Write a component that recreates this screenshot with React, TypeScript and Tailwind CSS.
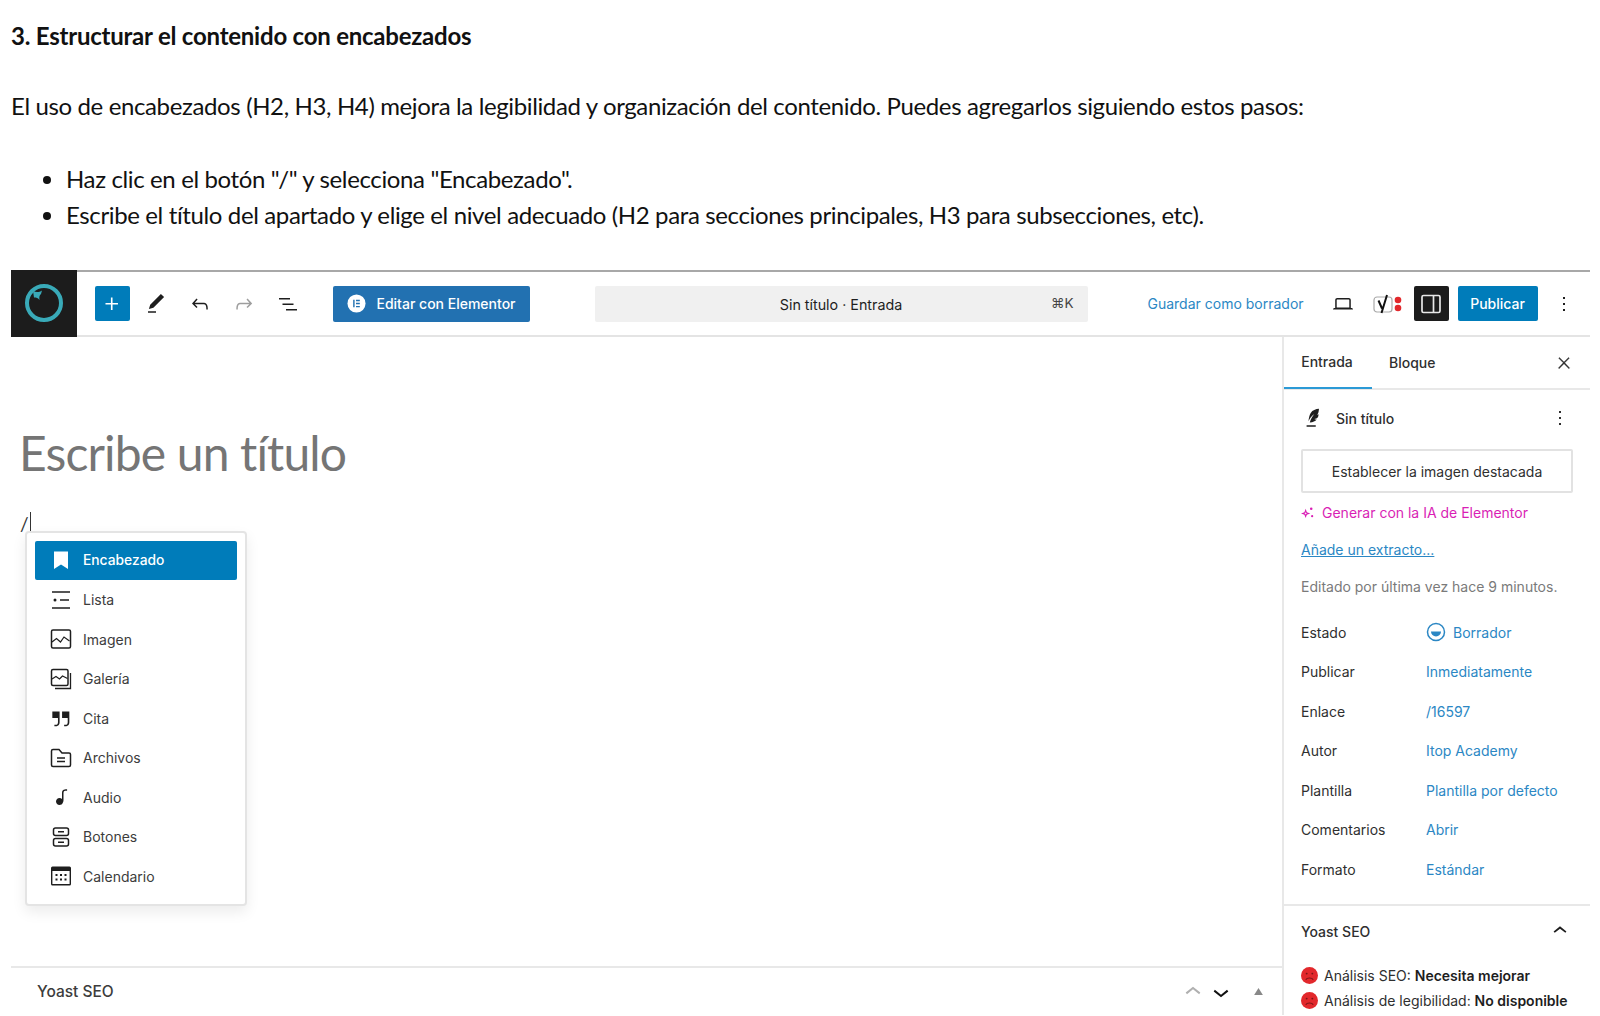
import type { ReactNode } from 'react';

const ui = "font-['Inter','Liberation_Sans',sans-serif]";

function Wp({ d, className = 'w-6 h-6', fill = 'currentColor' }: { d: string; className?: string; fill?: string }) {
  return (
    <svg viewBox="0 0 24 24" className={className} fill={fill}>
      <path d={d} />
    </svg>
  );
}

const paths = {
  plus: 'M11 12.5V17.5H12.5V12.5H17.5V11H12.5V6H11V11H6V12.5H11Z',
  brush: 'M20.1 5.1L16.9 2 6.2 12.7l-1.3 4.4 4.5-1.3L20.1 5.1zM4 20.8h8v-1.5H4v1.5z',
  undo: 'M18.3 11.7c-.6-.6-1.4-.9-2.3-.9H6.7l2.9-3.3-1.1-1-4.5 5L8.5 16l1-1-2.7-2.7H16c.5 0 .9.2 1.3.5 1 1 1 3.4 1 4.5v.3h1.5v-.2c0-1.5 0-4.3-1.5-5.7z',
  redo: 'M15.6 6.5l-1.1 1 2.9 3.3H8c-.9 0-1.7.3-2.3.9-1.4 1.5-1.4 4.2-1.4 5.6v.2h1.5v-.3c0-1.1 0-3.5 1-4.5.3-.3.7-.5 1.3-.5h9.2L14.5 15l1.1 1.1 4.6-4.6-4.6-5z',
  listView: 'M3 6h11v1.5H3V6zm3.5 5.5h11V13h-11v-1.5zM21 17H10v1.5h11V17z',
  close: 'M13 11.8l6.1-6.3-1-1-6.1 6.2-6.1-6.2-1 1 6.1 6.3-6.5 6.7 1 1 6.5-6.6 6.5 6.6 1-1z',
  more: 'M13 19h-2v-2h2v2zm0-6h-2v-2h2v2zm0-6h-2V5h2v2z',
  up: 'M6.5 12.4L12 8l5.5 4.4-.9 1.2L12 10l-4.5 3.6-1-1.2z',
  down: 'M17.5 11.6L12 16l-5.5-4.4.9-1.2L12 14l4.5-3.6 1 1.2z',
  laptop: 'M20.5 16h-.7V8c0-1.1-.9-2-2-2H6.2c-1.1 0-2 .9-2 2v8h-.7c-.8 0-1.5.7-1.5 1.5h20c0-.8-.7-1.5-1.5-1.5zM5.7 8c0-.3.2-.5.5-.5h11.6c.3 0 .5.2.5.5v7.6H5.7V8z',
  audio: 'M17.7 4.3c-1.2 0-2.8 0-3.8 1-.6.6-.9 1.5-.9 2.6V14c-.6-.6-1.5-1-2.5-1C8.6 13 7 14.6 7 16.5S8.6 20 10.5 20c1.5 0 2.8-1 3.3-2.3.5-.8.7-1.8.7-2.5V7.9c0-.7.2-1.2.5-1.6.6-.6 1.8-.6 2.8-.6h.3V4.3h-.4z',
  quote: 'M13 6v6h5.2v4c0 .8-.2 1.4-.5 1.7-.6.6-1.6.6-2.5.5h-.3v1.5h.5c1 0 2.3-.1 3.3-1 .6-.6 1-1.6 1-2.8V6H13zm-9 6h5.2v4c0 .8-.2 1.4-.5 1.7-.6.6-1.6.6-2.5.5h-.3v1.5h.5c1 0 2.3-.1 3.3-1 .6-.6 1-1.6 1-2.8V6H4v6z',
};

function Line({ children }: { children: ReactNode }) {
  return (
    <svg viewBox="0 0 24 24" className="w-6 h-6" fill="none" stroke="currentColor" strokeWidth="1.5">
      {children}
    </svg>
  );
}

const blockItems: { label: string; icon: ReactNode }[] = [
  {
    label: 'Encabezado',
    icon: <Wp d="M5 3.500h14V21l-7-4.600L5 21z" />,
  },
  {
    label: 'Lista',
    icon: (
      <Line>
        <path d="M3 4h18M11 12h9M3 20h18" />
        <circle cx="6" cy="12" r="1.500" fill="currentColor" stroke="none" />
      </Line>
    ),
  },
  {
    label: 'Imagen',
    icon: (
      <Line>
        <rect x="2.500" y="3" width="19" height="18" rx="1.500" />
        <path d="M3 15l4.500-3.500 4 3.500 3.500-5 5.500 4" strokeWidth="1.200" />
      </Line>
    ),
  },
  {
    label: 'Galería',
    icon: (
      <Line>
        <rect x="2.500" y="2.500" width="16.500" height="16" rx="1.500" />
        <path d="M3 12l4-2.500 3.500 2.500 3-3 5 2.500" strokeWidth="1.200" />
        <path d="M21.500 6v15.500H6" strokeWidth="1.300" />
      </Line>
    ),
  },
  { label: 'Cita', icon: <Wp d={paths.quote} className="w-[26px] h-[26px] -mx-px" /> },
  {
    label: 'Archivos',
    icon: (
      <Line>
        <path d="M2.500 5a1.500 1.500 0 0 1 1.500-1.500h6l3 3.500h7a1.500 1.500 0 0 1 1.500 1.500V19a1.500 1.500 0 0 1-1.500 1.500H4A1.500 1.500 0 0 1 2.500 19z" />
        <path d="M8 12h8M8 15.500h8" />
      </Line>
    ),
  },
  { label: 'Audio', icon: <Wp d={paths.audio} /> },
  {
    label: 'Botones',
    icon: (
      <Line>
        <rect x="4.500" y="3" width="15" height="7.500" rx="2" />
        <rect x="4.500" y="13.500" width="15" height="7.500" rx="2" />
        <path d="M9 6.800h6M9 17.200h6" />
      </Line>
    ),
  },
  {
    label: 'Calendario',
    icon: (
      <svg viewBox="0 0 24 24" className="w-6 h-6" fill="currentColor">
        <path d="M3.500 2.500h17A1.500 1.500 0 0 1 22 4v16a1.500 1.500 0 0 1-1.500 1.500h-17A1.500 1.500 0 0 1 2 20V4a1.500 1.500 0 0 1 1.500-1.500zm-.1 4.500v13c0 .1 0 .1.1.1h17c.1 0 .1 0 .1-.1V7z" />
        <path d="M6.500 10h2v2h-2zm4.500 0h2v2h-2zm4.500 0h2v2h-2zM6.500 14.500h2v2h-2zm4.500 0h2v2h-2zm4.500 0h2v2h-2z" />
      </svg>
    ),
  },
];

const meta = [
  { label: 'Publicar', value: 'Inmediatamente' },
  { label: 'Enlace', value: '/16597' },
  { label: 'Autor', value: 'Itop Academy' },
  { label: 'Plantilla', value: 'Plantilla por defecto' },
  { label: 'Comentarios', value: 'Abrir' },
  { label: 'Formato', value: 'Estándar' },
];

function Sad() {
  return (
    <svg viewBox="0 0 18 18" className="w-[17px] h-[17px] shrink-0">
      <circle cx="9" cy="9" r="9" fill="#e2282c" />
      <circle cx="6" cy="7" r="1" fill="#7a1517" />
      <circle cx="12" cy="7" r="1" fill="#7a1517" />
      <path d="M5 13.500c1.500-2.500 6.500-2.500 8 0" fill="none" stroke="#7a1517" strokeWidth="1.200" />
    </svg>
  );
}

function Toolbar() {
  return (
    <div className="flex h-[67px] shrink-0 items-center border-t-2 border-b-2 border-t-[#a8a8a8] border-b-[#e4e4e4]">
      <div className="flex h-[67px] w-[66px] shrink-0 items-center justify-center bg-[#1c1c1c]">
        <svg viewBox="0 0 40 40" className="-mt-px w-10 h-10" fill="none">
          <circle cx="20" cy="20" r="17" stroke="#39aab8" strokeWidth="4" />
          <path d="M9 8c3 1.500 6 1.500 9-.5l-1 3.500c-1.500 1-2 3-1.500 6-1.500-2-3-2.500-5.500-2.500z" fill="#39aab8" />
        </svg>
      </div>
      <button className="ml-[17.500px] flex h-[35px] w-[35px] items-center justify-center rounded-[2px] bg-[#007cba] text-white">
        <Wp d={paths.plus} className="w-[26px] h-[26px]" />
      </button>
      <div className="ml-[14px] flex items-center gap-5 text-[#1e1e1e]">
        <Wp d={paths.brush} />
        <Wp d={paths.undo} />
        <Wp d={paths.redo} className="w-6 h-6 text-[#9e9e9e]" />
        <Wp d={paths.listView} />
      </div>
      <button className="ml-[33px] flex h-[36px] w-[197px] items-center rounded-[2px] bg-[#2271b1] pl-[14px] text-[14px] font-medium text-white">
        <svg viewBox="0 0 20 20" className="w-[19px] h-[19px]">
          <circle cx="10" cy="10" r="9.500" fill="#fff" />
          <path d="M6.500 6h1.500v8H6.500zM9.500 6h4v1.500h-4zM9.500 9.250h4v1.500h-4zM9.500 12.500h4V14h-4z" fill="#2271b1" />
        </svg>
        <span className="ml-[11px]">Editar con Elementor</span>
      </button>
      <div className="relative ml-[65px] flex h-[36px] w-[493px] items-center justify-center rounded-[2px] bg-[#f0f0f0] text-[14.300px] text-[#1e1e1e]">
        <span className="mt-[3px]">Sin título · Entrada</span>
        <span className="absolute right-[14px] text-[13.500px] text-[#444]">⌘K</span>
      </div>
      <span className="ml-[60px] text-[14px] text-[#2b87c4]">Guardar como borrador</span>
      <div className="ml-[27px] text-[#1e1e1e]">
        <Wp d={paths.laptop} />
      </div>
      <svg viewBox="0 0 32 24" className="ml-[17px] h-6 w-8">
        <rect x="2" y="5" width="18" height="15" rx="3" fill="none" stroke="#aaa" strokeWidth="1.200" />
        <path d="M6.500 8.500l3.500 8M15 3L9.500 21" fill="none" stroke="#111" strokeWidth="2" />
        <circle cx="26" cy="8" r="3.300" fill="#e2282c" />
        <circle cx="26" cy="16" r="3.300" fill="#e2282c" />
      </svg>
      <button className="ml-[10px] flex h-[35px] w-[35px] items-center justify-center rounded-[2px] bg-[#1c1c1c] text-[#e8e8e8]">
        <svg viewBox="0 0 24 24" className="w-6 h-6" fill="none" stroke="currentColor" strokeWidth="1.700">
          <rect x="3" y="3.500" width="18" height="17" rx="1.500" />
          <path d="M14.500 3.500v17" />
        </svg>
      </button>
      <button className="ml-[9px] flex h-[35px] w-[80px] items-center justify-center rounded-[2px] bg-[#007cba] text-[14px] font-medium text-white">
        Publicar
      </button>
      <div className="ml-[14px] text-[#1e1e1e]">
        <Wp d={paths.more} />
      </div>
    </div>
  );
}

function Sidebar() {
  return (
    <aside className="flex w-[308px] shrink-0 flex-col border-l-2 border-[#e8e8e8] text-[14px] text-[#2f2f2f]">
      <div className="flex h-[53px] shrink-0 items-center border-b-2 border-[#e8e8e8]">
        <div className="flex h-[53px] w-[88px] items-center justify-center border-b-2 border-[#2b9ad6] pr-[2px]">
          <span className="font-medium">Entrada</span>
        </div>
        <span className="ml-[17px] font-medium">Bloque</span>
        <div className="ml-auto mr-[17px] h-[18px] w-[18px]">
          <Wp d={paths.close} className="w-[18px] h-[18px] stroke-current stroke-[0.5]" />
        </div>
      </div>
      <div className="flex flex-col pl-[17px] pr-[17px]">
        <div className="mt-[16px] flex h-6 items-center">
          <svg viewBox="0 0 24 24" className="ml-px w-[22px] h-[22px] text-[#1e1e1e]" fill="currentColor">
            <path d="M18.500 2c-3.500.3-7 1.500-9 4.500C8 9 7.500 12 7 15.500c1.500-3 3.500-6 6.500-8-2 2.500-4 5.500-5 9.500 3.500-.5 6-1.500 7.500-3.500-1 0-2 0-2.500-.5 1.500 0 3-.5 3.800-1.800.7-1.200.7-2.300.7-3.200-.6.300-1.300.300-1.800.200 1.300-.7 2-2 2.300-6zM5 20h10v1.500H5z" />
          </svg>
          <span className="ml-[12px] font-medium">Sin título</span>
          <div className="ml-auto mr-[1px] flex h-6 w-6 items-center justify-center">
            <Wp d={paths.more} className="w-6 h-6" />
          </div>
        </div>
        <button className="mt-[19px] h-[44px] w-[272px] rounded-[2px] border-2 border-[#e2e2e2] text-[14px] text-[#2f2f2f]">
          Establecer la imagen destacada
        </button>
        <div className="mt-[9px] flex h-[20px] items-center text-[#d91fb5]">
          <svg viewBox="0 0 14 14" className="w-[13px] h-[13px]" fill="currentColor">
            <path d="M5 3l1.300 3.700L10 8 6.300 9.300 5 13 3.700 9.300 0 8l3.700-1.300zM5 6.500L4.600 7.600 3.500 8l1.100.4.400 1.100.4-1.100 1.100-.4-1.100-.4z" />
            <circle cx="11" cy="3" r="1.400" />
            <circle cx="12" cy="11" r="1.200" />
          </svg>
          <span className="ml-[8px]">Generar con la IA de Elementor</span>
        </div>
        <a className="mt-[18px] h-[20px] leading-[20px] text-[#2b87c4] underline">Añade un extracto...</a>
        <p className="mt-[17px] h-[20px] leading-[20px] text-[#7a7a7a]">Editado por última vez hace 9 minutos.</p>
        <div className="mt-[15.500px] flex h-[39.500px] items-center">
          <span className="w-[125px]">Estado</span>
          <svg viewBox="0 0 20 20" className="w-[20px] h-[20px] text-[#2b87c4]">
            <circle cx="10" cy="10" r="8.500" fill="none" stroke="currentColor" strokeWidth="1.500" />
            <path d="M5 9.500h10a5 5 0 0 1-10 0z" fill="currentColor" />
          </svg>
          <span className="ml-[7px] text-[#2b87c4]">Borrador</span>
        </div>
        {meta.map((m) => (
          <div key={m.label} className="flex h-[39.500px] items-center">
            <span className="w-[125px]">{m.label}</span>
            <span className="text-[#2b87c4]">{m.value}</span>
          </div>
        ))}
      </div>
      <div className="mt-[15px] border-t-2 border-[#e8e8e8] pl-[17px] pr-[17px]">
        <div className="mt-[13px] flex h-6 items-center justify-between">
          <span className="font-medium">Yoast SEO</span>
          <div className="mr-[-1px]">
            <Wp d={paths.up} className="w-7 h-7 text-[#1e1e1e]" />
          </div>
        </div>
        <div className="mt-[20px] flex h-[25px] items-center gap-[6px]">
          <Sad />
          <span>
            Análisis SEO: <span className="font-semibold text-[#1e1e1e]">Necesita mejorar</span>
          </span>
        </div>
        <div className="flex h-[24.500px] items-center gap-[6px]">
          <Sad />
          <span>
            Análisis de legibilidad: <span className="font-semibold text-[#1e1e1e]">No disponible</span>
          </span>
        </div>
      </div>
    </aside>
  );
}

function EditorCanvas() {
  return (
    <div className="relative flex min-w-0 flex-1 flex-col">
      <div className="flex-1 pl-[9px]">
        <h2 className="mt-[84px] -ml-px font-['Lato',sans-serif] text-[48px] leading-[64px] tracking-[-0.85px] text-[#757575]">
          Escribe un título
        </h2>
        <div className="mt-[23px] flex h-[28px] items-center font-['Lato',sans-serif] text-[19px] text-[#333]">
          <span className="mt-[4px]">/</span>
          <span className="ml-[1px] h-[21px] w-[1px] bg-[#333]" />
        </div>
      </div>

      {/* block inserter */}
      <div className="absolute left-[14px] top-[193.500px] w-[222px] rounded-[4px] border-2 border-[#e4e4e4] bg-white p-[8px] shadow-[0_6px_14px_rgba(0,0,0,0.08)]">
        {blockItems.map((item, i) => (
          <div
            key={item.label}
            className={
              i === 0
                ? 'flex h-[39.500px] items-center rounded-[2px] bg-[#007cba] pl-[14px] text-[13.800px] font-medium text-white'
                : 'flex h-[39.500px] items-center pl-[14px] text-[14px] text-[#3c3c3c]'
            }
          >
            <span className={i === 0 ? 'text-white' : 'text-[#1e1e1e]'}>{item.icon}</span>
            <span className="ml-[10px]">{item.label}</span>
          </div>
        ))}
      </div>

      <div className="flex h-[49px] shrink-0 items-center border-t-2 border-[#e8e8e8] pl-[26px] pr-[16px] text-[15.500px] font-medium text-[#3c3c3c]">
        <span>Yoast SEO</span>
        <div className="ml-auto flex items-center">
          <Wp d={paths.up} className="w-8 h-8 text-[#b0b0b0]" />
          <Wp d={paths.down} className="-ml-[4px] w-8 h-8 text-[#111]" />
          <svg viewBox="0 0 10 8" className="ml-[17px] mr-[3px] h-[7px] w-[9px] text-[#888]" fill="currentColor">
            <path d="M5 0l5 8H0z" />
          </svg>
        </div>
      </div>
    </div>
  );
}

export default function App() {
  return (
    <div className="h-[1016px] w-[1600px] overflow-hidden bg-white pl-[11px] pr-[10px] text-black">
      <article className="font-['Lato',sans-serif] text-[24px] tracking-[-0.37px] text-[#111]">
        <h3 className="pt-[20px] text-[24px] font-bold leading-[32px] tracking-[-0.23px]">3. Estructurar el contenido con encabezados</h3>
        <p className="mt-[38px] leading-[32px]">
          El uso de encabezados (H2, H3, H4) mejora la legibilidad y organización del contenido. Puedes agregarlos siguiendo estos pasos:
        </p>
        <ul className="mt-[39px] list-disc pl-[55px] leading-[36px]">
          <li>Haz clic en el botón "/" y selecciona "Encabezado".</li>
          <li>Escribe el título del apartado y elige el nivel adecuado (H2 para secciones principales, H3 para subsecciones, etc).</li>
        </ul>
      </article>
      <section className={`mt-[37px] flex h-[745px] flex-col ${ui}`}>
        <Toolbar />
        <div className="flex min-h-0 flex-1">
          <EditorCanvas />
          <Sidebar />
        </div>
      </section>
    </div>
  );
}
